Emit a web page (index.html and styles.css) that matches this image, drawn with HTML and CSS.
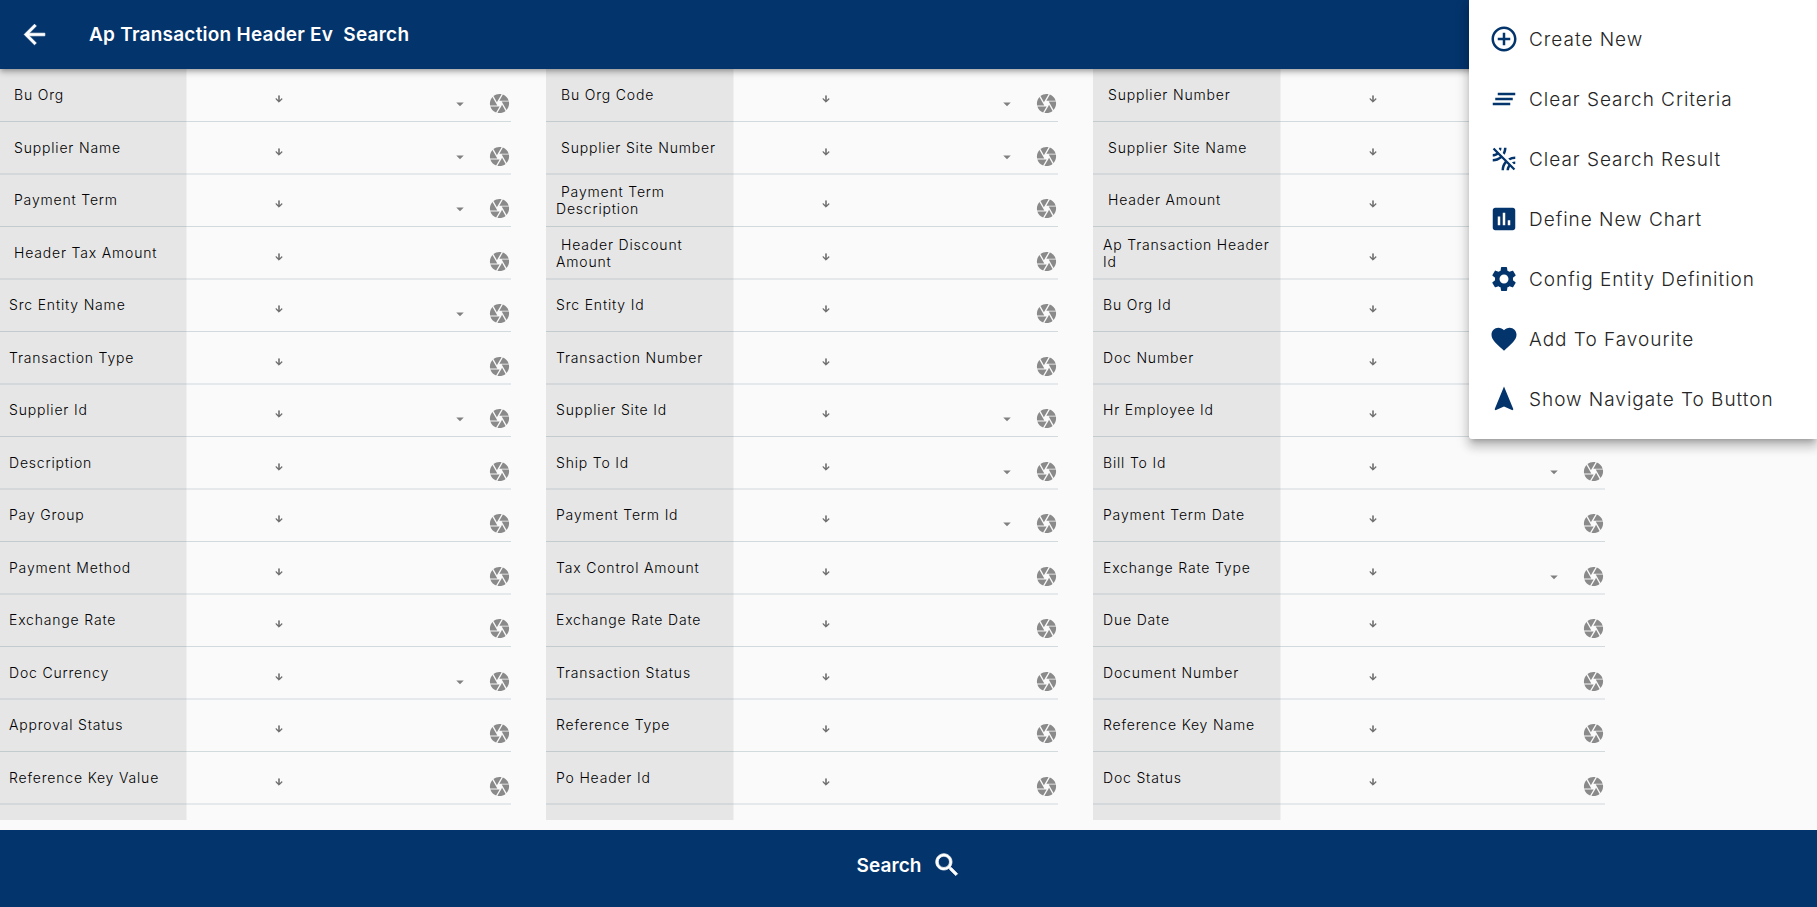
FILE: index.html
```
<!DOCTYPE html>
<html lang="en">
<head>
<meta charset="utf-8">
<title>Ap Transaction Header Ev Search</title>
<link rel="stylesheet" href="styles.css">
</head>
<body>
<svg class="sprite" aria-hidden="true">
  <symbol id="camera" viewBox="0 0 24 24"><path d="M9.4 10.5l4.77-8.26C13.47 2.09 12.75 2 12 2c-2.4 0-4.6.85-6.32 2.25l3.66 6.35.06-.1zM21.54 9c-.92-2.92-3.15-5.26-6-6.34L11.88 9h9.66zm.26 1h-7.49l.29.5 4.76 8.25C21 16.97 22 14.61 22 12c0-.69-.07-1.35-.2-2zM8.54 12l-3.9-6.75C3.01 7.03 2 9.39 2 12c0 .69.07 1.35.2 2h7.49l-1.15-2zm-6.08 3c.92 2.92 3.15 5.26 6 6.34L12.12 15H2.46zm11.27 0l-3.9 6.76c.7.15 1.42.24 2.17.24 2.4 0 4.6-.85 6.32-2.25l-3.66-6.35-.93 1.6z"/></symbol>
  <symbol id="down" viewBox="0 0 24 24"><path d="M20 12l-1.41-1.41L13 16.17V4h-2v12.17l-5.58-5.59L4 12l8 8 8-8z"/></symbol>
  <symbol id="drop" viewBox="0 0 24 24"><path d="M7 10l5 5 5-5z"/></symbol>
</svg>
<div class="app">
  <header class="topbar">
    <svg class="back" viewBox="0 0 24 24"><path d="M20 11H7.83l5.59-5.59L12 4l-8 8 8 8 1.41-1.41L7.83 13H20v-2z"/></svg>
    <h1 class="title">Ap Transaction Header Ev&nbsp; Search</h1>
  </header>
  <main class="form" id="form"></main>
  <footer class="searchbar">
    <span class="search-text">Search</span>
    <svg class="glass" viewBox="0 0 24 24"><path d="M15.5 14h-.79l-.28-.27C15.41 12.59 16 11.11 16 9.5 16 5.91 13.09 3 9.5 3S3 5.91 3 9.5 5.91 16 9.5 16c1.61 0 3.09-.59 4.23-1.57l.27.28v.79l5 4.99L20.49 19l-4.99-5zm-6 0C7.01 14 5 11.99 5 9.5S7.01 5 9.5 5 14 7.01 14 9.5 11.99 14 9.5 14z"/></svg>
  </footer>
</div>
<nav class="menu">
  <a class="item"><svg viewBox="0 0 24 24"><path d="M13 7h-2v4H7v2h4v4h2v-4h4v-2h-4V7zm-1-5C6.48 2 2 6.48 2 12s4.48 10 10 10 10-4.48 10-10S17.52 2 12 2zm0 18c-4.41 0-8-3.59-8-8s3.59-8 8-8 8 3.59 8 8-3.59 8-8 8z"/></svg><span>Create New</span></a>
  <a class="item"><svg viewBox="0 0 24 24"><path d="M5 13h14v-2H5v2zm-2 4h14v-2H3v2zM7 7v2h14V7H7z"/></svg><span>Clear Search Criteria</span></a>
  <a class="item"><svg viewBox="0 0 24 24"><path d="M10 3H8c0 .37-.04.72-.12 1.06l1.59 1.59C9.81 4.84 10 3.94 10 3zM3 4.27l2.84 2.84C5.03 7.67 4.06 8 3 8v2c1.61 0 3.09-.55 4.27-1.46L8.7 9.97C7.14 11.24 5.16 12 3 12v2c2.71 0 5.19-.99 7.11-2.62l2.5 2.5C10.99 15.81 10 18.29 10 21h2c0-2.16.76-4.14 2.03-5.69l1.43 1.43C14.55 17.91 14 19.39 14 21h2c0-1.06.33-2.03.89-2.84L19.73 21 21 19.73 4.27 3 3 4.27zM14 3h-2c0 1.5-.37 2.91-1.02 4.16l1.46 1.46C13.42 6.98 14 5.06 14 3zm5.94 13.12c.34-.08.69-.12 1.06-.12v-2c-.94 0-1.84.19-2.66.52l1.6 1.6zm-4.56-4.56l1.46 1.46C18.09 12.37 19.5 12 21 12v-2c-2.06 0-3.98.58-5.62 1.56z"/></svg><span>Clear Search Result</span></a>
  <a class="item"><svg viewBox="0 0 24 24"><path d="M19 3H5c-1.1 0-2 .9-2 2v14c0 1.1.9 2 2 2h14c1.1 0 2-.9 2-2V5c0-1.1-.9-2-2-2zM9 17H7v-7h2v7zm4 0h-2V7h2v10zm4 0h-2v-4h2v4z"/></svg><span>Define New Chart</span></a>
  <a class="item"><svg viewBox="0 0 24 24"><path d="M19.14 12.94c.04-.3.06-.61.06-.94 0-.32-.02-.64-.07-.94l2.03-1.58c.18-.14.23-.41.12-.61l-1.92-3.32c-.12-.22-.37-.29-.59-.22l-2.39.96c-.5-.38-1.03-.7-1.62-.94l-.36-2.54c-.04-.24-.24-.41-.48-.41h-3.84c-.24 0-.43.17-.47.41l-.36 2.54c-.59.24-1.13.57-1.62.94l-2.39-.96c-.22-.08-.47 0-.59.22L2.74 8.87c-.12.21-.08.47.12.61l2.03 1.58c-.05.3-.09.63-.09.94s.02.64.07.94l-2.03 1.58c-.18.14-.23.41-.12.61l1.92 3.32c.12.22.37.29.59.22l2.39-.96c.5.38 1.03.7 1.62.94l.36 2.54c.05.24.24.41.48.41h3.84c.24 0 .44-.17.47-.41l.36-2.54c.59-.24 1.13-.56 1.62-.94l2.39.96c.22.08.47 0 .59-.22l1.92-3.32c.12-.22.07-.47-.12-.61l-2.01-1.58zM12 15.6c-1.98 0-3.6-1.62-3.6-3.6s1.62-3.6 3.6-3.6 3.6 1.62 3.6 3.6-1.62 3.6-3.6 3.6z"/></svg><span>Config Entity Definition</span></a>
  <a class="item"><svg viewBox="0 0 24 24"><path d="M12 21.35l-1.45-1.32C5.4 15.36 2 12.28 2 8.5 2 5.42 4.42 3 7.5 3c1.74 0 3.41.81 4.5 2.09C13.09 3.81 14.76 3 16.5 3 19.58 3 22 5.42 22 8.5c0 3.78-3.4 6.86-8.55 11.54L12 21.35z"/></svg><span>Add To Favourite</span></a>
  <a class="item"><svg viewBox="0 0 24 24"><path d="M12 2L4.5 20.29l.71.71L12 18l6.79 3 .71-.71z"/></svg><span>Show Navigate To Button</span></a>
</nav>
<script src="form.js"></script>
</body>
</html>
```
FILE: styles.css
```
* { box-sizing: border-box; }
body {
  margin: 0;
  background: #fafafa;
  color: #000;
  font-family: Inter, "Open Sans", sans-serif;
  overflow: hidden;
}
.sprite { display: none; }
.app { height: 907px; display: flex; flex-direction: column; overflow: hidden; }
.topbar {
  flex: none;
  height: 69px;
  display: flex;
  align-items: center;
  padding: 0 0 1px 19px;
  background: #03346b;
  color: #fff;
  box-shadow: 0 2px 4px -1px rgba(0,0,0,.2), 0 4px 5px rgba(0,0,0,.14), 0 1px 10px rgba(0,0,0,.12);
  z-index: 1;
}
.back { width: 31px; height: 31px; fill: #fff; stroke: #fff; stroke-width: .6; }
.title { margin: 0 0 0 39px; padding-top: 1px; font-size: 19px; line-height: 24px; font-weight: 600; letter-spacing: 0.24px; white-space: pre; }
.form {
  flex: none;
  height: 751px;
  display: flex;
  gap: 35px;
  margin-left: -1px;
}
.column {
  width: 512px;
  flex: none;
  background: linear-gradient(to right, #e6e6e6 187px, #f0f0f0 187px, #f0f0f0 188px, transparent 188px);
}
.row {
  height: 52px;
  display: flex;
  border-bottom: 1px solid rgba(96,125,139,.25);
}
.row:first-child { height: 53px; }
.row:nth-child(even) { height: 53px; border-bottom: 2px solid rgba(96,125,139,.13); }
.label {
  width: 188px;
  height: 51px;
  padding: 1px 4px 0 10px;
  display: flex;
  align-items: center;
  font-size: 14px;
  line-height: 17.5px;
  font-weight: 300;
  letter-spacing: 0.82px;
}
.label.spaced { text-indent: 5px; }
.field {
  flex: 1;
  height: 52px;
  display: grid;
  grid-template-columns: 184px 1fr 23px;
  align-items: center;
}
.row:nth-child(odd) .field { height: 50px; }
.row:nth-child(odd) .label { height: 49px; }
.row:first-child .field { height: 52px; }
.row:first-child .label { height: 51px; }
.sort { width: 10px; height: 10px; margin: 8px 0 0 87px; fill: #5c5c5c; stroke: #5c5c5c; stroke-width: 1.2; }
.drop { width: 18px; height: 18px; margin: 17px 0 0 80px; fill: #808080; }
.camera { width: 23px; height: 23px; margin-top: 17px; grid-column: 3; fill: #8a8a8a; }
.searchbar {
  margin-top: 10px;
  height: 77px;
  display: flex;
  justify-content: center;
  align-items: center;
  gap: 10px;
  padding: 0 0 8px 1px;
  background: #03346b;
  color: #fff;
  font-size: 19px;
  font-weight: 600;
  letter-spacing: 0.1px;
}
.search-text { padding-top: 2px; }
.glass { width: 30px; height: 30px; fill: #fff; stroke: #fff; stroke-width: .6; }
.menu {
  position: absolute;
  z-index: 2;
  top: 0;
  right: 0;
  width: 348px;
  height: 439px;
  padding: 9px 0 0 20px;
  background: #fff;
  border-radius: 0 0 0 3px;
  box-shadow: 0 5px 5px -3px rgba(0,0,0,.2), 0 8px 10px 1px rgba(0,0,0,.14), 0 3px 14px 2px rgba(0,0,0,.12);
}
.item {
  height: 60px;
  display: flex;
  align-items: center;
  gap: 10px;
  color: #252525;
  font-size: 19px;
  font-weight: 300;
  letter-spacing: 0.98px;
  white-space: nowrap;
}
.item svg { width: 30px; height: 30px; fill: #03346b; }
```
FILE: form.js
```
// A leading space indents the label; a trailing "*" adds the drop-down marker.
const columns = [
  [" Bu Org*", " Supplier Name*", " Payment Term*", " Header Tax Amount", "Src Entity Name*", "Transaction Type", "Supplier Id*", "Description", "Pay Group", "Payment Method", "Exchange Rate", "Doc Currency*", "Approval Status", "Reference Key Value"],
  [" Bu Org Code*", " Supplier Site Number*", " Payment Term Description", " Header Discount Amount", "Src Entity Id", "Transaction Number", "Supplier Site Id*", "Ship To Id*", "Payment Term Id*", "Tax Control Amount", "Exchange Rate Date", "Transaction Status", "Reference Type", "Po Header Id"],
  [" Supplier Number", " Supplier Site Name", " Header Amount", "Ap Transaction Header Id", "Bu Org Id", "Doc Number", "Hr Employee Id", "Bill To Id*", "Payment Term Date", "Exchange Rate Type*", "Due Date", "Document Number", "Reference Key Name", "Doc Status"]
];
const icon = name => `<svg class="${name === "down" ? "sort" : name}"><use href="#${name}"/></svg>`;
document.getElementById("form").innerHTML = columns.map(rows =>
  `<section class="column">${rows.map(r => `<div class="row"><div class="label${r[0] === " " ? " spaced" : ""}">${r.replace("*", "").trim()}</div><div class="field">${icon("down")}${r.endsWith("*") ? icon("drop") : ""}${icon("camera")}</div></div>`).join("")}</section>`
).join("");
```
